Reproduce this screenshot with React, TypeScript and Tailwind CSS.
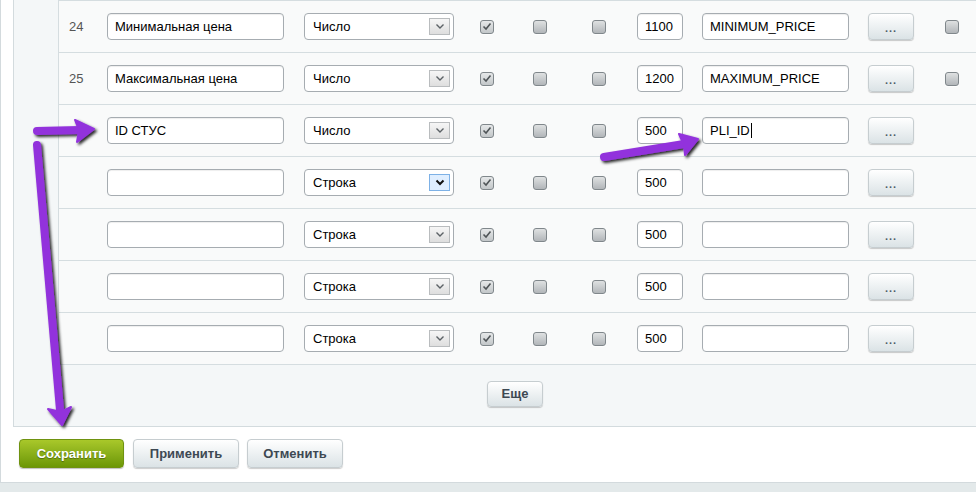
import React from "react";

type Row = {
  num?: string;
  name: string;
  type: string;
  sort: string;
  code: string;
  extra?: boolean;
  focusSelect?: boolean;
  caret?: boolean;
};

const rows: Row[] = [
  { num: "24", name: "Минимальная цена", type: "Число", sort: "1100", code: "MINIMUM_PRICE", extra: true },
  { num: "25", name: "Максимальная цена", type: "Число", sort: "1200", code: "MAXIMUM_PRICE", extra: true },
  { name: "ID СТУС", type: "Число", sort: "500", code: "PLI_ID", caret: true },
  { name: "", type: "Строка", sort: "500", code: "", focusSelect: true },
  { name: "", type: "Строка", sort: "500", code: "" },
  { name: "", type: "Строка", sort: "500", code: "" },
  { name: "", type: "Строка", sort: "500", code: "" },
];

function Field({ value, className, caret }: { value: string; className: string; caret?: boolean }) {
  return (
    <div
      className={`flex h-[27px] items-center rounded-[4px] border border-[#a6acb1] bg-white px-[7px] text-[13px] text-black shadow-[inset_0_1px_1px_rgba(0,0,0,0.07)] ${className}`}
    >
      {value}
      {caret && <span className="ml-[1px] h-[15px] w-px bg-black" />}
    </div>
  );
}

function Select({ value, focus }: { value: string; focus?: boolean }) {
  return (
    <div className="ml-[20px] flex h-[27px] w-[150px] items-center justify-between rounded-[4px] border border-[#a6acb1] bg-white pl-[8px] pr-[3px] text-[13px] text-black">
      <span>{value}</span>
      <span
        className={`flex h-[17px] w-[21px] items-center justify-center border ${
          focus ? "border-[#7db1e6] bg-[#dfeeff]" : "border-[#b9bcbe] bg-gradient-to-b from-[#f6f6f6] to-[#dedede]"
        }`}
      >
        <svg width="10" height="7" viewBox="0 0 10 7">
          <path
            d="M1.5 1.5 L5 5 L8.5 1.5"
            fill="none"
            stroke={focus ? "#111" : "#5c6266"}
            strokeWidth={focus ? 2 : 1.4}
          />
        </svg>
      </span>
    </div>
  );
}

function Box({ checked, className }: { checked?: boolean; className: string }) {
  return (
    <span
      className={`flex h-[14px] w-[14px] items-center justify-center rounded-[3px] border border-[#80878b] bg-gradient-to-b ${
        checked ? "from-[#e6e8e9] to-[#c3c7c9]" : "from-[#dfe1e2] to-[#b2b6b9]"
      } shadow-[0_1px_0_rgba(255,255,255,0.8)] ${className}`}
    >
      {checked && (
        <svg width="10" height="9" viewBox="0 0 10 9">
          <path d="M1.5 4.5 L4 7 L8.5 1.5" fill="none" stroke="#505558" strokeWidth="1.6" />
        </svg>
      )}
    </span>
  );
}

export default function App() {
  return (
    <div className="relative h-[492px] w-[976px] overflow-hidden bg-[#e3e9ea] font-['Liberation_Sans',Arial,sans-serif] text-[13px]">
      <div className="h-[483px] border-b border-l border-[#d3dadd] bg-white">
        <div className="ml-[12px] h-[427px] border-b border-l border-[#d3dbde] bg-[#f4f7f8]">
          <div className="ml-[44px] border-l border-[#d5dde0] bg-[#f9fafa]">
            {rows.map((r, i) => (
              <div
                key={i}
                className={`flex items-center border-t border-[#d5dde0] ${
                  i === rows.length - 1 ? "h-[53px] border-b" : "h-[52px]"
                }`}
              >
                <span className="w-[48px] pl-[10px] text-[13px] text-[#555]">{r.num}</span>
                <Field value={r.name} className="w-[177px]" />
                <Select value={r.type} focus={r.focusSelect} />
                <Box checked className="ml-[26px]" />
                <Box className="ml-[39px]" />
                <Box className="ml-[45px]" />
                <Field value={r.sort} className="ml-[31px] w-[46px]" />
                <Field value={r.code} caret={r.caret} className="ml-[19px] w-[147px]" />
                <button className="ml-[19px] h-[27px] w-[46px] rounded-[4px] border border-[#c6cdd0] bg-gradient-to-b from-white to-[#dbe3e6] pt-[3px] text-[11px] font-bold tracking-[1px] text-[#4e5d68] shadow-[0_1px_1px_rgba(0,0,0,0.2)]">
                  ...
                </button>
                {r.extra && <Box className="ml-[31px]" />}
              </div>
            ))}
          </div>
          <div className="h-[61px] pl-[473px] pt-[16px]">
            <button className="h-[26px] w-[56px] rounded-[4px] border border-[#c6cdd0] bg-gradient-to-b from-white to-[#dbe3e6] text-[13px] font-bold text-[#3d4852] shadow-[0_1px_1px_rgba(0,0,0,0.2)]">
              Еще
            </button>
          </div>
        </div>
        <div className="flex items-center pl-[18px] pt-[12px]">
          <button className="h-[29px] w-[105px] rounded-[4px] border border-[#6f9210] bg-gradient-to-b from-[#a9c82a] to-[#6c9705] text-[13px] font-bold text-white shadow-[0_1px_1px_rgba(0,0,0,0.25)] [text-shadow:0_1px_1px_rgba(0,0,0,0.35)]">
            Сохранить
          </button>
          <button className="ml-[9px] h-[29px] w-[106px] rounded-[4px] border border-[#c6cdd0] bg-gradient-to-b from-white to-[#dbe3e6] text-[13px] font-bold text-[#3d4852] shadow-[0_1px_1px_rgba(0,0,0,0.2)]">
            Применить
          </button>
          <button className="ml-[8px] h-[29px] w-[96px] rounded-[4px] border border-[#c6cdd0] bg-gradient-to-b from-white to-[#dbe3e6] text-[13px] font-bold text-[#3d4852] shadow-[0_1px_1px_rgba(0,0,0,0.2)]">
            Отменить
          </button>
        </div>
      </div>

      <svg className="pointer-events-none absolute left-0 top-0" width="976" height="492" viewBox="0 0 976 492">
        <defs>
          <filter id="sh" x="-20%" y="-20%" width="140%" height="140%">
            <feDropShadow dx="2" dy="2" stdDeviation="1.6" floodColor="#000" floodOpacity="0.85" />
          </filter>
        </defs>
        <g filter="url(#sh)" fill="#9233dc" stroke="#9233dc" strokeLinecap="round" strokeLinejoin="round">
          <path d="M37 131 L80 130" strokeWidth="8" fill="none" />
          <path d="M75 120 L94 129 L77 142 L79 130 Z" strokeWidth="2" />

          <path d="M37 145 L60 410" strokeWidth="8" fill="none" />
          <path d="M48 409 L61 412 L71 407 L62 425 Z" strokeWidth="2" />

          <path d="M604 157 L684 144" strokeWidth="8" fill="none" />
          <path d="M679 134 L698 139 L685 155 L684 145 Z" strokeWidth="2" />
        </g>
      </svg>
    </div>
  );
}
